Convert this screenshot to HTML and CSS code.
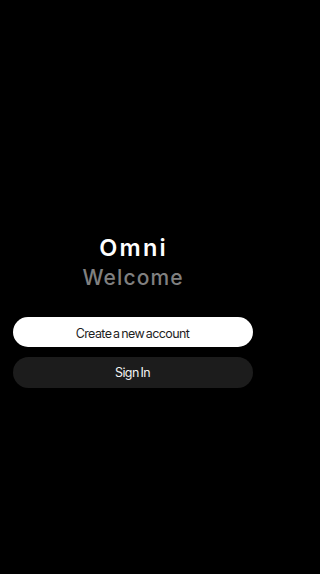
FILE: index.html
```html
<!DOCTYPE html>
<html>
<head>
<meta charset="utf-8">
<link rel="stylesheet" href="styles.css">
</head>
<body>
<main class="screen">
  <div class="brand">
    <h1 class="title">Omni</h1>
    <h2 class="subtitle">Welcome</h2>
  </div>
  <div class="actions">
    <button class="btn btn-primary">Create a new account</button>
    <button class="btn btn-secondary">Sign In</button>
  </div>
</main>
</body>
</html>
```

FILE: styles.css
```css
html, body {
  margin: 0;
  padding: 0;
  background: #000;
}
.screen {
  box-sizing: border-box;
  width: 265px;
  height: 574px;
  padding: 234.3px 12.5px 0 12.5px;
  display: flex;
  flex-direction: column;
  font-family: "Inter", "Noto Sans", sans-serif;
}
.brand {
  display: flex;
  flex-direction: column;
  align-items: center;
}
.title {
  margin: 0;
  color: #fff;
  font-size: 23.5px;
  font-weight: 600;
  line-height: 28px;
  letter-spacing: 2.2px;
  text-indent: 2.2px;
}
.subtitle {
  margin: 4px 0 0 0;
  color: #808080;
  font-size: 21px;
  font-weight: 500;
  line-height: 24px;
  letter-spacing: 1.1px;
  text-indent: 1.1px;
}
.actions {
  margin-top: 26.5px;
  display: flex;
  flex-direction: column;
  gap: 10.5px;
}
.btn {
  box-sizing: border-box;
  border: none;
  font-family: "Inter", "Noto Sans", sans-serif;
  font-size: 12.5px;
  font-weight: 400;
  padding: 0;
  letter-spacing: -0.6px;
  word-spacing: -1.2px;
}
.btn-primary {
  height: 30px;
  border-radius: 15px;
  padding-top: 3px;
  background: #fff;
  color: #1e1e1e;
}
.btn-secondary {
  height: 31px;
  border-radius: 15.5px;
  background: #1c1c1c;
  color: #f2f2f2;
}
```
